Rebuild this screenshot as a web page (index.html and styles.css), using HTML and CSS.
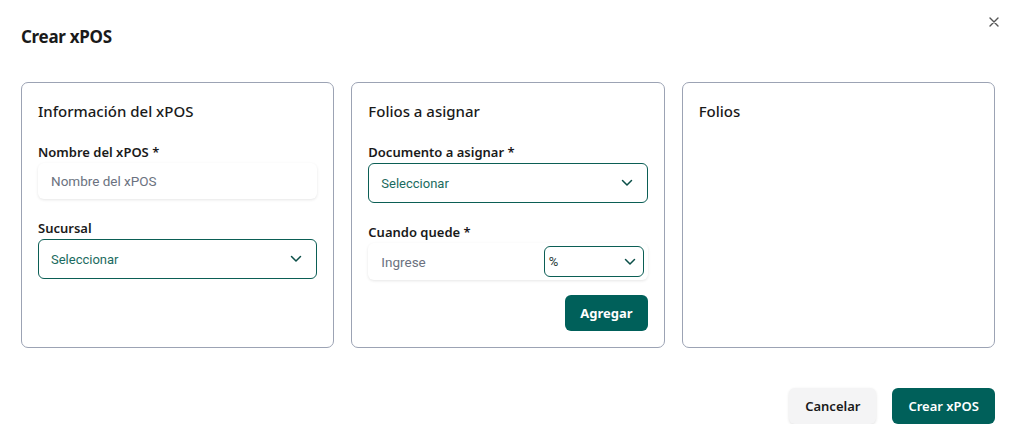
FILE: index.html
```html
<!DOCTYPE html>
<html lang="es">
<head>
<meta charset="utf-8">
<title>Crear xPOS</title>
<link rel="stylesheet" href="styles.css">
</head>
<body>
<div class="modal">
  <div class="modal-head">
    <h1 class="title">Crear xPOS</h1>
    <button class="close" aria-label="Cerrar">
      <svg width="10" height="10" viewBox="0 0 10 10"><path d="M1 1L9 9M9 1L1 9" stroke="#555" stroke-width="1.4" stroke-linecap="round"/></svg>
    </button>
  </div>
  <div class="cards">
    <section class="card">
      <h2 class="card-title">Información del xPOS</h2>
      <div class="field">
        <label class="label">Nombre del xPOS *</label>
        <div class="input">Nombre del xPOS</div>
      </div>
      <div class="field">
        <label class="label">Sucursal</label>
        <div class="select">
          <span>Seleccionar</span>
          <svg class="chev" width="12" height="8" viewBox="0 0 12 8"><path d="M1.5 1.5L6 6L10.5 1.5" fill="none" stroke="#0b4f48" stroke-width="1.5" stroke-linecap="round" stroke-linejoin="round"/></svg>
        </div>
      </div>
    </section>
    <section class="card">
      <h2 class="card-title">Folios a asignar</h2>
      <div class="field">
        <label class="label">Documento a asignar *</label>
        <div class="select">
          <span>Seleccionar</span>
          <svg class="chev" width="12" height="8" viewBox="0 0 12 8"><path d="M1.5 1.5L6 6L10.5 1.5" fill="none" stroke="#0b4f48" stroke-width="1.5" stroke-linecap="round" stroke-linejoin="round"/></svg>
        </div>
      </div>
      <div class="field">
        <label class="label">Cuando quede *</label>
        <div class="group">
          <span class="group-input">Ingrese</span>
          <div class="mini-select">
            <span>%</span>
            <svg class="chev" width="12" height="8" viewBox="0 0 12 8"><path d="M1.5 1.5L6 6L10.5 1.5" fill="none" stroke="#0b4f48" stroke-width="1.5" stroke-linecap="round" stroke-linejoin="round"/></svg>
          </div>
        </div>
      </div>
      <div class="actions">
        <button class="btn primary small">Agregar</button>
      </div>
    </section>
    <section class="card">
      <h2 class="card-title">Folios</h2>
    </section>
  </div>
  <div class="footer">
    <button class="btn secondary">Cancelar</button>
    <button class="btn primary">Crear xPOS</button>
  </div>
</div>
</body>
</html>
```
FILE: styles.css
```css
* { box-sizing: border-box; }
html, body { margin: 0; padding: 0; background: #fff; }
body { font-family: "Noto Sans", "Open Sans", sans-serif; color: #1a1a1a; }

.modal { padding: 25px 20px 0 21px; }

.modal-head { display: flex; justify-content: space-between; align-items: flex-start; }
.title { margin: 0; font-size: 17px; line-height: 24px; font-weight: 700; letter-spacing: -0.3px; }
.close { border: 0; background: none; padding: 0; margin: -10px -6px 0 0; width: 14px; height: 14px; display: flex; align-items: center; justify-content: center; cursor: pointer; }

.cards { display: flex; gap: 17px; margin-top: 33px; }
.card { flex: 1; border: 1px solid #9ca3b4; border-radius: 7px; padding: 16px; min-height: 266px; display: flex; flex-direction: column; }
.card-title { margin: 0 0 20px; font-size: 15px; line-height: 24px; font-weight: 500; }

.field { display: flex; flex-direction: column; }
.field + .field { margin-top: 20px; }
.label { font-size: 13px; line-height: 18px; font-weight: 600; margin-bottom: 2px; }

.input { height: 36px; border-radius: 6px; box-shadow: 0 1px 3px rgba(0,0,0,0.1); background: #fff; display: flex; align-items: center; padding-left: 13px; font-family: Roboto, "Liberation Sans", sans-serif; font-size: 13.5px; color: #6b7280; }

.select { height: 40px; border: 1px solid #0b5e55; border-radius: 6px; display: flex; align-items: center; justify-content: space-between; padding: 0 14px 0 12px; font-family: Roboto, "Liberation Sans", sans-serif; font-size: 13px; color: #1b6b60; }
.chev { display: block; }

.group { height: 37px; border-radius: 6px; box-shadow: 0 1px 3px rgba(0,0,0,0.1); display: flex; align-items: center; justify-content: space-between; padding: 0 4px 0 13px; }
.group-input { font-family: Roboto, "Liberation Sans", sans-serif; font-size: 13.5px; color: #6b7280; }
.mini-select { width: 100px; height: 31px; border: 1px solid #0b5e55; border-radius: 6px; display: flex; align-items: center; justify-content: space-between; padding: 0 7px 0 4px; font-family: Roboto, "Liberation Sans", sans-serif; font-size: 13px; color: #1f3a36; }

.actions { display: flex; justify-content: flex-end; margin-top: 15px; }

.btn { font-family: "Noto Sans", "Open Sans", sans-serif; font-size: 13px; font-weight: 600; border-radius: 6px; border: 0; height: 36px; padding: 0 16px; cursor: pointer; }
.btn.primary { background: #00605a; color: #fff; }
.btn.small { font-weight: 700; padding: 0 15px; }
.btn.secondary { background: #f4f4f5; color: #1a1a1a; box-shadow: 0 1px 3px rgba(0,0,0,0.12); }

.footer { display: flex; justify-content: flex-end; gap: 16px; margin-top: 40px; }
```
